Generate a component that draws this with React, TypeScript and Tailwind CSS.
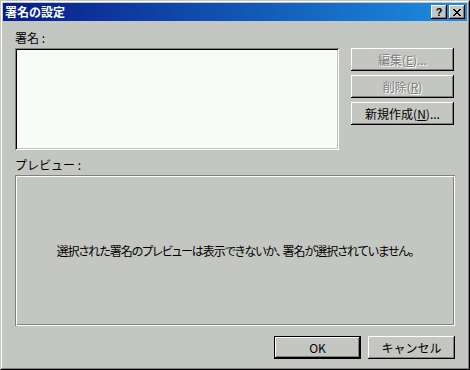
import React from "react";

const FONT = "font-['Noto_Sans_CJK_JP','Noto_Sans',sans-serif]";

function Btn({
  children,
  disabled,
  isDefault,
  className = "",
}: {
  children: React.ReactNode;
  disabled?: boolean;
  isDefault?: boolean;
  className?: string;
}) {
  const frame = isDefault
    ? "border border-black shadow-[inset_-1px_-1px_0_#000,inset_1px_1px_0_#fff,inset_-2px_-2px_0_#808080]"
    : "shadow-[inset_-1px_-1px_0_#000,inset_1px_1px_0_#fff,inset_-2px_-2px_0_#808080]";
  return (
    <div
      className={`flex h-[23px] items-center justify-center bg-[#c4c6c2] text-[12px] leading-none ${frame} ${
        disabled ? "text-[#808080] [text-shadow:1px_1px_0_#fff]" : "text-black"
      } ${className}`}
    >
      {children}
    </div>
  );
}

export default function App() {
  return (
    <div className={`h-[370px] w-[470px] ${FONT} select-none`}>
      <div className="h-full w-full border border-t-[#c4c6c2] border-l-[#c4c6c2] border-r-black border-b-black bg-[#c4c6c2]">
        <div className="flex h-full w-full flex-col border border-t-white border-l-white border-r-[#808080] border-b-[#808080] p-px">
          {/* Title bar */}
          <div className="flex h-[18px] items-center bg-[linear-gradient(to_right,#081c88,#1c8ee0)] pl-[2px] pr-[2px]">
            <div className="flex-1 text-[12px] font-bold leading-none text-white">署名の設定</div>
            <div className="flex gap-[2px]">
              <div className="flex h-[14px] w-[16px] items-center justify-center bg-[#c4c6c2] shadow-[inset_-1px_-1px_0_#000,inset_1px_1px_0_#fff,inset_-2px_-2px_0_#808080]">
                <span className="font-['Liberation_Sans',sans-serif] text-[11px] font-bold leading-none text-black">?</span>
              </div>
              <div className="flex h-[14px] w-[16px] items-center justify-center bg-[#c4c6c2] shadow-[inset_-1px_-1px_0_#000,inset_1px_1px_0_#fff,inset_-2px_-2px_0_#808080]">
                <svg width="8" height="7" viewBox="0 0 8 7" shapeRendering="crispEdges">
                  <path d="M0 0h2v1h-2zM6 0h2v1h-2zM1 1h2v1h-2zM5 1h2v1h-2zM2 2h4v1h-4zM3 3h2v1h-2zM2 4h4v1h-4zM1 5h2v1h-2zM5 5h2v1h-2zM0 6h2v1h-2zM6 6h2v1h-2z" fill="#000" />
                </svg>
              </div>
            </div>
          </div>

          {/* Content */}
          <div className="flex flex-1 flex-col px-[12px] pt-[10px] text-black">
            <div className="flex items-start">
              <div className="flex w-[324px] flex-col">
                <div className="h-[14px] text-[12px] leading-[14px]">署名 :</div>
                <div className="mt-[3px] h-[102px] w-[324px] bg-[#f8fcf8] shadow-[inset_1px_1px_0_#808080,inset_-1px_-1px_0_#fff,inset_2px_2px_0_#000,inset_-2px_-2px_0_#c4c6c2]" />
              </div>
              <div className="ml-[12px] mt-[17px] flex w-[103px] flex-col gap-[4px]">
                <Btn disabled>
                  編集(<span className="underline">E</span>)...
                </Btn>
                <Btn disabled>
                  削除(<span className="underline">R</span>)
                </Btn>
                <Btn>
                  新規作成(<span className="underline">N</span>)...
                </Btn>
              </div>
            </div>

            <div className="mt-[8px] h-[14px] text-[12px] leading-[14px]">プレビュー :</div>
            <div className="mt-[3px] flex h-[151px] w-full items-center justify-center shadow-[inset_1px_1px_0_#808080,inset_-1px_-1px_0_#fff,inset_2px_2px_0_#fff,inset_-2px_-2px_0_#808080]">
              <span className="text-[12px] leading-none tracking-[-1px] [font-feature-settings:'palt']">
                選択された署名のプレビューは表示できないか、 署名が選択されていません。
              </span>
            </div>

            <div className="mt-[10px] flex justify-end gap-[7px]">
              <Btn isDefault className="w-[87px]">
                OK
              </Btn>
              <Btn className="w-[87px]">キャンセル</Btn>
            </div>
          </div>
        </div>
      </div>
    </div>
  );
}
